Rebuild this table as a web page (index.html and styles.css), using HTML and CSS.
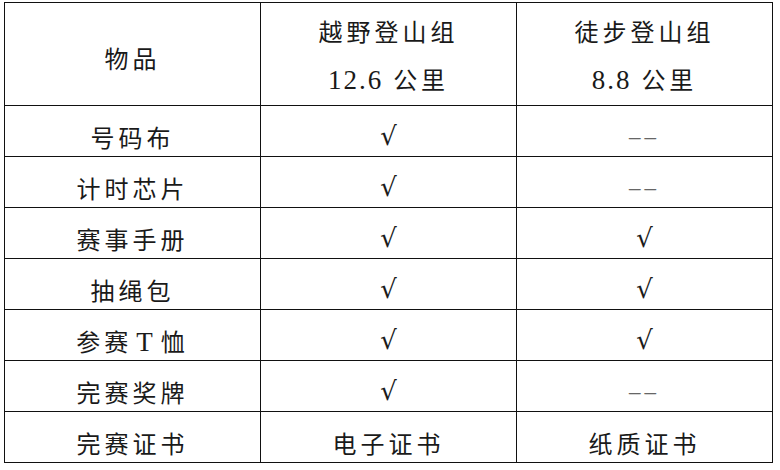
FILE: index.html
```html
<!DOCTYPE html>
<html lang="zh-CN">
<head>
<meta charset="utf-8">
<link rel="stylesheet" href="styles.css">
</head>
<body>
<table class="kit">
  <colgroup><col class="c"><col class="c"><col class="c"></colgroup>
  <tr class="head">
    <td>物品</td>
    <td><div>越野登山组</div><div><span class="num">12.6</span> 公里</div></td>
    <td><div>徒步登山组</div><div><span class="num">8.8</span> 公里</div></td>
  </tr>
  <tr><td>号码布</td><td><span class="ok">√</span></td><td><span class="no">––</span></td></tr>
  <tr><td>计时芯片</td><td><span class="ok">√</span></td><td><span class="no">––</span></td></tr>
  <tr><td>赛事手册</td><td><span class="ok">√</span></td><td><span class="ok">√</span></td></tr>
  <tr><td>抽绳包</td><td><span class="ok">√</span></td><td><span class="ok">√</span></td></tr>
  <tr><td>参赛<span class="num t">T</span>恤</td><td><span class="ok">√</span></td><td><span class="ok">√</span></td></tr>
  <tr><td>完赛奖牌</td><td><span class="ok">√</span></td><td><span class="no">––</span></td></tr>
  <tr><td>完赛证书</td><td>电子证书</td><td>纸质证书</td></tr>
</table>
</body>
</html>
```

FILE: styles.css
```css
html, body {
  margin: 0;
  padding: 0;
  background: #fff;
}

.kit {
  margin: 2px 0 0 4px;
  border-collapse: collapse;
  table-layout: fixed;
  width: 767px;
  font-family: "Liberation Serif", "Noto Sans CJK SC", serif;
  font-size: 24px;
  color: #1a1a1a;
}

.kit .c {
  width: 256px;
}

.kit td {
  border: 1px solid #111;
  text-align: center;
  vertical-align: middle;
  height: 51px;
  padding: 10px 0 0 0;
  box-sizing: border-box;
  letter-spacing: 4px;
}

.kit .head td {
  height: 102px;
  padding-top: 7px;
}

.kit .head td div {
  line-height: 47px;
}

.num {
  font-family: "Liberation Serif", serif;
  font-size: 27px;
  letter-spacing: 2px;
}

.t {
  margin: 0 6px 0 4px;
}

.ok {
  font-family: "DejaVu Serif", serif;
  font-size: 26px;
  letter-spacing: 0;
}

.no {
  font-family: "Liberation Serif", serif;
  color: #666;
  letter-spacing: 4px;
  font-size: 23px;
}
```
